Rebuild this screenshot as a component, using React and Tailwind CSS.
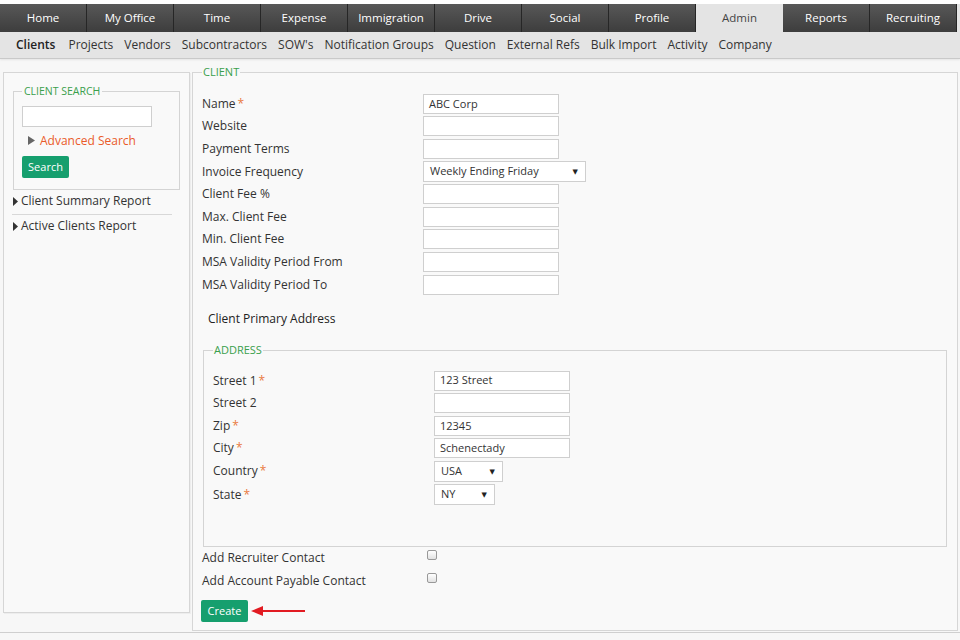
const tabs = ['Home', 'My Office', 'Time', 'Expense', 'Immigration', 'Drive', 'Social', 'Profile', 'Admin', 'Reports', 'Recruiting'];
const subLinks = ['Clients', 'Projects', 'Vendors', 'Subcontractors', "SOW's", 'Notification Groups', 'Question', 'External Refs', 'Bulk Import', 'Activity', 'Company'];

const clientFields = [
  { label: 'Name', required: true, value: 'ABC Corp' },
  { label: 'Website' },
  { label: 'Payment Terms' },
  { label: 'Invoice Frequency', select: 'Weekly Ending Friday', w: 'w-[163px]' },
  { label: 'Client Fee %' },
  { label: 'Max. Client Fee' },
  { label: 'Min. Client Fee' },
  { label: 'MSA Validity Period From' },
  { label: 'MSA Validity Period To' },
];

const addressFields = [
  { label: 'Street 1', required: true, value: '123 Street' },
  { label: 'Street 2' },
  { label: 'Zip', required: true, value: '12345' },
  { label: 'City', required: true, value: 'Schenectady' },
  { label: 'Country', required: true, select: 'USA', w: 'w-[69px]' },
  { label: 'State', required: true, select: 'NY', w: 'w-[61px]' },
];

function Label({ text, required }) {
  return (
    <span>
      {text}
      {required && <span className="ml-[2px] text-[#e9793f]">*</span>}
    </span>
  );
}

function Field({ field }) {
  if (field.select) {
    return (
      <div className={`flex h-[21px] ${field.w} items-center justify-between border border-[#cfcfcf] bg-white pl-[6px] pr-[7px] text-[11px] text-[#333]`}>
        <span>{field.select}</span>
        <span className="text-[7px] leading-none text-[#222]">▼</span>
      </div>
    );
  }
  return (
    <div className="flex h-[20px] w-[136px] items-center border border-[#cfcfcf] bg-white px-[5px] text-[11px] text-[#333]">
      {field.value}
    </div>
  );
}

function FormRow({ field, labelWidth }) {
  return (
    <div className="flex h-[22.6px] items-center">
      <div className={labelWidth}>
        <Label text={field.label} required={field.required} />
      </div>
      <Field field={field} />
    </div>
  );
}

function Caret({ color = '#333', w = 5 }) {
  return (
    <svg width={w} height="9" viewBox={`0 0 ${w} 9`} className="shrink-0">
      <path d={`M0 0 L${w} 4.5 L0 9 Z`} fill={color} />
    </svg>
  );
}

export default function App() {
  return (
    <div className="h-[640px] overflow-hidden bg-[#f7f7f7] text-[12px] text-[#333]" style={{ fontFamily: '"Open Sans", "DejaVu Sans", sans-serif' }}>
      <div className="h-[4px] bg-white" />
      <div className="flex h-[28px] bg-white text-[11.5px]">
        {tabs.map((t) => (
          <div
            key={t}
            className={
              t === 'Admin'
                ? 'flex w-[87px] items-center justify-center bg-[#e4e4e4] text-[#444]'
                : 'flex w-[87px] items-center justify-center border-r border-[#262626] bg-gradient-to-b from-[#585858] to-[#3d3d3d] text-white'
            }
          >
            {t}
          </div>
        ))}
        <div className="flex-1 bg-[#e4e4e4]" />
      </div>
      <div className="flex h-[27px] items-center gap-[11px] border-b border-[#c9c9c9] bg-[#e4e4e4] px-[16px] shadow-[0_1px_2px_rgba(0,0,0,0.08)]">
        {subLinks.map((s) => (
          <span key={s} className={s === 'Clients' ? 'mr-[2px] font-semibold text-[#222]' : 'text-[#333]'}>
            {s}
          </span>
        ))}
      </div>

      <div className="flex items-start pl-[3px]">
        <div className="mt-[13px] h-[541px] w-[187px] border border-[#d6d6d6] bg-[#f9f9f9] shadow-[1px_1px_0_rgba(0,0,0,0.04)]">
          <fieldset className="mx-[9px] mt-[11px] h-[106px] border border-[#d4d4d4] pl-[8px]">
            <legend className="px-[2px] text-[10.5px] uppercase text-[#3aa04c]">Client Search</legend>
            <div className="mt-[6px] h-[21px] w-[130px] border border-[#cfcfcf] bg-white" />
            <div className="mt-[5px] flex items-center gap-[5px] pl-[6px] text-[12px] text-[#ea5b2a]">
              <Caret color="#666" w={7} />
              <span>Advanced Search</span>
            </div>
            <div className="mt-[6px] flex h-[22px] w-[47px] items-center justify-center rounded-[2px] bg-[#169f6e] text-[11px] text-white">
              Search
            </div>
          </fieldset>
          <div className="mx-[8px] mt-[0px] w-[160px]">
            <div className="flex h-[22px] items-center gap-[3px] pl-[1px]">
              <Caret />
              <span>Client Summary Report</span>
            </div>
            <div className="mt-[2px] h-px bg-[#d8d8d8]" />
            <div className="flex h-[22px] items-center gap-[3px] pl-[1px]">
              <Caret />
              <span>Active Clients Report</span>
            </div>
          </div>
        </div>

        <fieldset className="ml-[2px] mt-[5px] h-[567px] w-[766px] border border-[#d6d6d6] bg-[#f9f9f9] pl-[9px] pr-[10px]">
          <legend className="px-[1px] text-[11px] uppercase text-[#3aa04c]">Client</legend>
          <div className="mt-[12px]">
            {clientFields.map((f) => (
              <FormRow key={f.label} field={f} labelWidth="w-[221px]" />
            ))}
          </div>
          <div className="ml-[6px] mt-[14px] text-[#222]">Client Primary Address</div>
          <fieldset className="ml-[1px] mt-[14px] h-[205px] border border-[#d4d4d4] pl-[9px]">
            <legend className="px-[1px] text-[11px] uppercase text-[#3aa04c]">Address</legend>
            <div className="mt-[11px]">
              {addressFields.map((f) => (
                <div key={f.label} className={f.label === 'State' ? 'mt-[1px]' : ''}>
                  <FormRow field={f} labelWidth="w-[221px]" />
                </div>
              ))}
            </div>
          </fieldset>
          <div>
            {['Add Recruiter Contact', 'Add Account Payable Contact'].map((l) => (
              <div key={l} className="flex h-[22.6px] items-center">
                <span className="w-[225px]">{l}</span>
                <span className="mb-[6px] h-[10px] w-[10px] rounded-[2px] border border-[#999] bg-gradient-to-b from-white to-[#e2e2e2]" />
              </div>
            ))}
          </div>
          <div className="mt-[8px] flex items-center">
            <div className="-ml-[1px] flex h-[22px] w-[47px] items-center justify-center rounded-[2px] bg-[#169f6e] text-[11px] text-white">
              Create
            </div>
            <svg width="56" height="12" viewBox="0 0 56 12" className="ml-[2px]">
              <path d="M10 6 H55" stroke="#e21b22" strokeWidth="2" />
              <path d="M1 6 L13 1 L13 11 Z" fill="#e21b22" />
            </svg>
          </div>
        </fieldset>
      </div>
      <div className="mt-[1px] h-px bg-[#cfcfcf]" />
    </div>
  );
}
